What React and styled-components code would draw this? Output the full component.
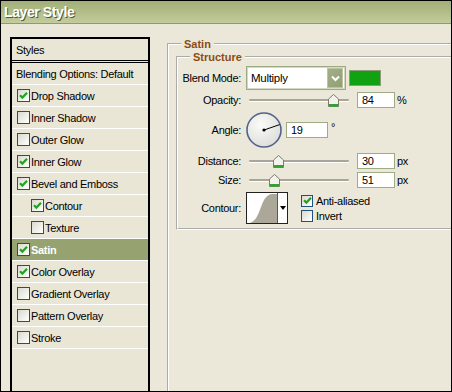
import React from 'react';
import styled, { createGlobalStyle, css } from 'styled-components';

const GlobalStyle = createGlobalStyle`
  html, body {
    margin: 0;
    padding: 0;
    background: #ebe8d9;
  }
  body {
    font-family: "Liberation Sans", Arial, sans-serif;
    font-size: 11px;
    letter-spacing: -0.3px;
    color: #000;
  }
`;

const Window = styled.div`
  width: 452px;
  height: 392px;
  box-sizing: border-box;
  border: 1px solid #000;
  background: #ebe8d9;
  display: flex;
  flex-direction: column;
  overflow: hidden;
`;

const TitleBar = styled.div`
  flex: none;
  height: 23px;
  box-sizing: border-box;
  padding: 0 0 1px 3px;
  background: linear-gradient(to bottom, #a1af79 0%, #b0bc87 45%, #c3cc9c 100%);
  border-bottom: 1px solid #8e9c6a;
  display: flex;
  align-items: center;
  color: #fff;
  font-weight: bold;
  font-size: 14px;
  letter-spacing: -0.4px;
  text-shadow: 1px 1px 0 #4f5a37;
`;

const Body = styled.div`
  flex: 1;
  min-height: 0;
  display: flex;
  padding-left: 9px;
`;

const StylesPanel = styled.div`
  flex: none;
  width: 140px;
  box-sizing: border-box;
  margin-top: 13px;
  border: 2px solid #000;
  border-bottom: none;
  background: #e9e6d5;
  display: flex;
  flex-direction: column;
`;

const StylesHeader = styled.div`
  height: 21px;
  border-bottom: 3px double #000;
  padding-left: 4px;
  display: flex;
  align-items: center;
`;

const StyleRow = styled.div`
  height: 22px;
  box-sizing: border-box;
  border-bottom: 1px solid #fff;
  padding-left: ${p => p.$indent}px;
  display: flex;
  align-items: center;
  gap: 1px;
  ${p => p.$selected && css`
    background: #96a371;
    color: #fff;
    font-weight: bold;
  `}
`;

const Box = styled.span`
  flex: none;
  width: ${p => p.$size}px;
  height: ${p => p.$size}px;
  box-sizing: border-box;
  border: 1px solid #1c5180;
  background: linear-gradient(135deg, #d9d9d2 0%, #efefe9 55%, #fff 100%);
  display: flex;
  align-items: center;
  justify-content: center;
`;

const Settings = styled.div`
  flex: 1;
  min-width: 0;
  padding: 14px 0 0 17px;
  display: flex;
  flex-direction: column;
`;

const Group = styled.fieldset`
  margin: ${p => p.$top || 0}px 0 0 0;
  padding: ${p => p.$pad};
  min-width: 0;
  border-style: groove;
  border-color: #fff;
  border-width: ${p => p.$borders};
  ${p => p.$grow && css`flex: 1;`}
`;

const Legend = styled.legend`
  padding: 0 3px;
  margin-left: ${p => p.$offset}px;
  line-height: 12px;
  font-weight: bold;
  color: #8d4c13;
  letter-spacing: 0;
`;

const Row = styled.div`
  display: flex;
  align-items: center;
  height: ${p => p.$h}px;
  margin-top: ${p => p.$mt || 0}px;
`;

const Label = styled.span`
  flex: none;
  width: 63px;
  margin-right: 5px;
  text-align: right;
`;

const Select = styled.div`
  flex: none;
  width: 100px;
  height: 24px;
  box-sizing: border-box;
  border: 1px solid #9ea985;
  box-shadow: inset 0 0 0 1px #d3d9c2;
  background: #fff;
  display: flex;
  align-items: center;
  padding: 0 2px 0 4px;
  font-size: 11.5px;
`;

const SelectButton = styled.span`
  margin-left: auto;
  width: 16px;
  height: 20px;
  box-sizing: border-box;
  border: 1px solid #bcc4a6;
  background: linear-gradient(135deg, #a3ae86, #929e74);
  display: flex;
  align-items: center;
  justify-content: center;
`;

const Swatch = styled.span`
  flex: none;
  width: 32px;
  height: 16px;
  box-sizing: border-box;
  margin-left: 3px;
  border: 1px solid #8f9a7a;
  background: #10a210;
`;

const Slider = styled.div`
  flex: none;
  position: relative;
  width: 100px;
  height: 16px;
  margin-left: 3px;
  &::before {
    content: '';
    position: absolute;
    left: 0;
    right: 0;
    top: 7px;
    height: 2px;
    border-radius: 2px;
    background: #a9a698;
    box-shadow: 0 1px 0 #fff;
  }
`;

const Thumb = styled.svg`
  position: absolute;
  top: 2px;
`;

const NumBox = styled.div`
  flex: none;
  width: ${p => p.$w}px;
  height: 16px;
  box-sizing: border-box;
  margin-left: ${p => p.$ml}px;
  border: 1px solid #9fab85;
  background: #fff;
  padding-left: 4px;
  display: flex;
  align-items: center;
`;

const Unit = styled.span`
  margin-left: 2px;
  ${p => p.$raise && css`
    margin-left: 3px;
    align-self: flex-start;
    margin-top: 9px;
  `}
`;

const ContourBox = styled.div`
  flex: none;
  width: 42px;
  height: 32px;
  box-sizing: border-box;
  border: 1px solid #222;
  background: #fff;
  display: flex;
`;

const ContourArrow = styled.div`
  flex: 1;
  border-left: 1px solid #5a5850;
  display: flex;
  align-items: center;
  justify-content: center;
`;

const Options = styled.div`
  margin-left: 13px;
  display: flex;
  flex-direction: column;
  gap: 3px;
`;

const Option = styled.label`
  display: flex;
  align-items: center;
  gap: 3px;
`;

const CheckBox = ({ checked, size = 13 }) => (
  <Box $size={size}>
    {checked && (
      <svg width="9" height="9" viewBox="0 0 9 9">
        <path d="M1 4.2 L3.4 6.6 L8 1.8" fill="none" stroke="#22a322" strokeWidth="2.2" />
      </svg>
    )}
  </Box>
);

const SliderField = ({ pos }) => (
  <Slider>
    <Thumb width="11" height="13" viewBox="0 0 11 13" style={{ left: pos - 5.5 }}>
      <path d="M0.5 5 L5.5 0.5 L10.5 5 V12.5 H0.5 Z" fill="#f3f2ec" stroke="#7d7b6f" />
      <rect x="1" y="10" width="9" height="2.5" fill="#2ea52e" />
    </Thumb>
  </Slider>
);

const styleItems = [
  { name: 'Drop Shadow', checked: true },
  { name: 'Inner Shadow' },
  { name: 'Outer Glow' },
  { name: 'Inner Glow', checked: true },
  { name: 'Bevel and Emboss', checked: true },
  { name: 'Contour', checked: true, sub: true },
  { name: 'Texture', sub: true },
  { name: 'Satin', checked: true, selected: true },
  { name: 'Color Overlay', checked: true },
  { name: 'Gradient Overlay' },
  { name: 'Pattern Overlay' },
  { name: 'Stroke' },
];

const App = () => {
  const angle = 19;
  const rad = (angle * Math.PI) / 180;

  return (
    <>
      <GlobalStyle />
      <Window>
        <TitleBar>Layer Style</TitleBar>
        <Body>
          <StylesPanel>
            <StylesHeader>Styles</StylesHeader>
            <StyleRow $indent={4}>Blending Options: Default</StyleRow>
            {styleItems.map(item => (
              <StyleRow key={item.name} $indent={item.sub ? 19 : 5} $selected={item.selected}>
                <CheckBox checked={item.checked} />
                <span>{item.name}</span>
              </StyleRow>
            ))}
          </StylesPanel>

          <Settings>
            <Group $grow $pad="0 0 0 7px" $borders="2px 0 0 2px">
              <Legend $offset={5}>Satin</Legend>
              <Group $top={1} $pad="3px 0 4px 0" $borders="2px 0 2px 2px">
                <Legend $offset={12}>Structure</Legend>

                <Row $h={24}>
                  <Label>Blend Mode:</Label>
                  <Select>
                    Multiply
                    <SelectButton>
                      <svg width="9" height="7" viewBox="0 0 9 7">
                        <path d="M1 1.5 L4.5 5 L8 1.5" fill="none" stroke="#fff" strokeWidth="2" />
                      </svg>
                    </SelectButton>
                  </Select>
                  <Swatch />
                </Row>

                <Row $h={16} $mt={2}>
                  <Label>Opacity:</Label>
                  <SliderField pos={84} />
                  <NumBox $w={38} $ml={8}>84</NumBox>
                  <Unit>%</Unit>
                </Row>

                <Row $h={36} $mt={4}>
                  <Label>Angle:</Label>
                  <svg width="36" height="36" viewBox="0 0 36 36">
                    <defs>
                      <radialGradient id="dialFill" cx="40%" cy="35%" r="70%">
                        <stop offset="0%" stopColor="#fbfbf9" />
                        <stop offset="100%" stopColor="#dcdcd8" />
                      </radialGradient>
                    </defs>
                    <circle cx="18" cy="18" r="17" fill="url(#dialFill)" stroke="#52628e" strokeWidth="1.6" />
                    <line x1="18" y1="18" x2={18 + 16.5 * Math.cos(rad)} y2={18 - 16.5 * Math.sin(rad)} stroke="#000" strokeWidth="1" />
                    <circle cx="18" cy="18" r="1.6" fill="#000" />
                  </svg>
                  <NumBox $w={42} $ml={4}>19</NumBox>
                  <Unit $raise>°</Unit>
                </Row>

                <Row $h={16} $mt={5}>
                  <Label>Distance:</Label>
                  <SliderField pos={29} />
                  <NumBox $w={38} $ml={8}>30</NumBox>
                  <Unit>px</Unit>
                </Row>

                <Row $h={16} $mt={3}>
                  <Label>Size:</Label>
                  <SliderField pos={25} />
                  <NumBox $w={38} $ml={8}>51</NumBox>
                  <Unit>px</Unit>
                </Row>

                <Row $h={32} $mt={4}>
                  <Label>Contour:</Label>
                  <ContourBox>
                    <svg width="30" height="30" viewBox="0 0 30 30">
                      <path d="M2 30 C 11 29 13 14 17 7 C 20 2 23 1 26 1 L30 1 L30 30 Z" fill="#aca899" />
                    </svg>
                    <ContourArrow>
                      <svg width="6" height="4" viewBox="0 0 6 4">
                        <path d="M0 0 H6 L3 4 Z" fill="#000" />
                      </svg>
                    </ContourArrow>
                  </ContourBox>
                  <Options>
                    <Option>
                      <CheckBox checked size={12} />
                      Anti-aliased
                    </Option>
                    <Option>
                      <CheckBox size={12} />
                      Invert
                    </Option>
                  </Options>
                </Row>
              </Group>
            </Group>
          </Settings>
        </Body>
      </Window>
    </>
  );
};

export default App;
